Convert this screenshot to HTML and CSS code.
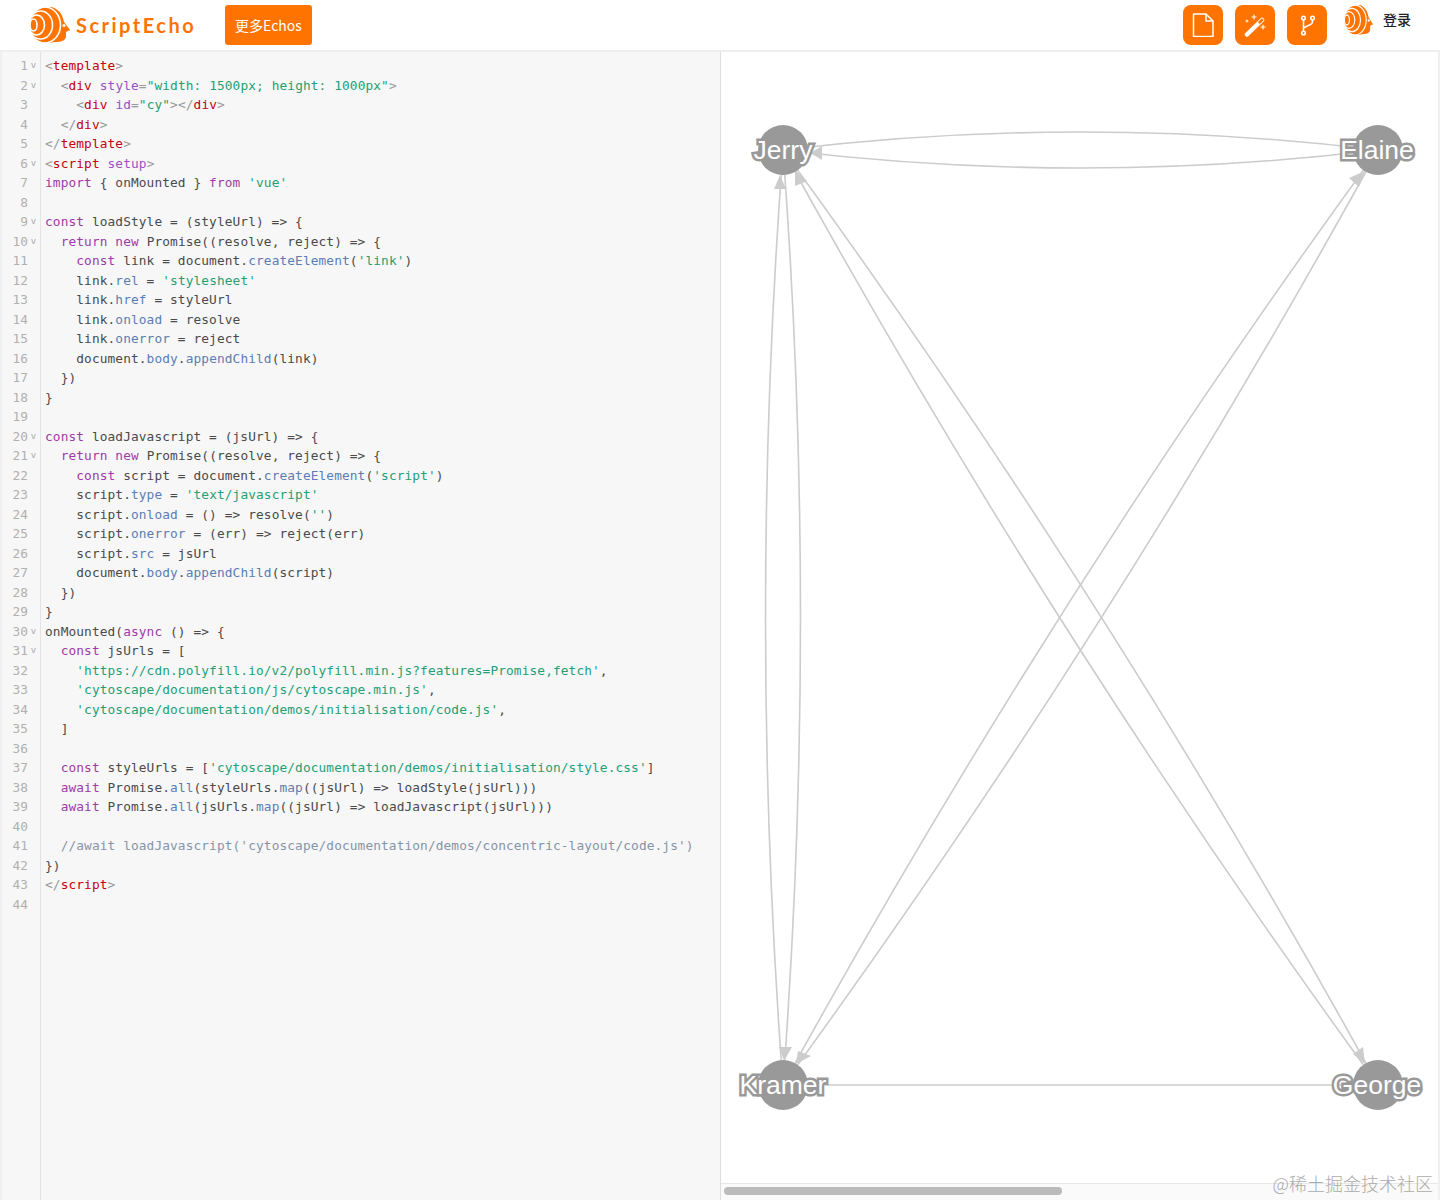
FILE: index.html
```html
<!DOCTYPE html>
<html lang="en">
<head>
  <meta charset="UTF-8">
  <title>ScriptEcho</title>
  <link rel="stylesheet" href="styles.css">
</head>
<body>
  <svg class="defs" width="0" height="0">
    <symbol id="logoHead" viewBox="0 0 42 36">
      <path fill="#ff7300" d="M12 2C17 0 24-1 28 2C33 5 35 10 36 15L42 23L38 25L38 30C37 34 33 35 27 35L20 36C10 36 0 28 0 18C0 11 5 5 12 2Z"/>
      <g fill="none" stroke="#fff" stroke-width="1.600">
        <ellipse cx="5.500" cy="18" rx="3.500" ry="6"/>
        <ellipse cx="8.500" cy="18" rx="8" ry="10"/>
        <ellipse cx="12.500" cy="18" rx="12" ry="14"/>
        <ellipse cx="16.500" cy="18" rx="16" ry="18"/>
      </g>
      <circle cx="36" cy="18.500" r="1.500" fill="#fff"/>
    </symbol>
  </svg>

  <header class="topbar">
    <div class="brand">
      <svg class="logo" width="42" height="36"><use href="#logoHead"/></svg>
      <span class="brand-name">ScriptEcho</span>
    </div>
    <button class="more-button">更多Echos</button>
    <div class="actions">
      <button class="icon-button">
        <svg width="24" height="24" viewBox="0 0 24 24" fill="none" stroke="#fff" stroke-width="1.500" stroke-linejoin="round">
          <path d="M2.500 1H15L22 8V23.500H2.500Z"/>
          <path d="M15 1V8H22"/>
        </svg>
      </button>
      <button class="icon-button">
        <svg width="24" height="24" viewBox="0 0 24 24" fill="none" stroke="#fff" stroke-linecap="round">
          <path d="M4 21.500L19 7" stroke-width="4.500"/>
          <path d="M16.600 9.300L19 7" stroke="#ff7300" stroke-width="2.600"/>
          <path d="M11 2V6M9 4H13M20 12V16M18 14H22M4 7V9M3 8H5" stroke-width="1.200"/>
        </svg>
      </button>
      <button class="icon-button">
        <svg width="24" height="24" viewBox="0 0 24 24" fill="none" stroke="#fff" stroke-width="1.600">
          <circle cx="8.500" cy="5" r="1.800"/>
          <circle cx="17.500" cy="5" r="1.800"/>
          <circle cx="8.500" cy="20" r="1.800"/>
          <path d="M8.500 7V18M17.500 7V9C17.500 12 12 12.500 8.500 15"/>
        </svg>
      </button>
      <svg class="avatar" width="30" height="30" viewBox="0 0 42 36" preserveAspectRatio="none"><use href="#logoHead"/></svg>
      <a class="login">登录</a>
    </div>
  </header>

  <main class="workspace">
    <section class="editor">
      <div class="gutter">
<div class="ln">1<i>v</i></div>
<div class="ln">2<i>v</i></div>
<div class="ln">3<i></i></div>
<div class="ln">4<i></i></div>
<div class="ln">5<i></i></div>
<div class="ln">6<i>v</i></div>
<div class="ln">7<i></i></div>
<div class="ln">8<i></i></div>
<div class="ln">9<i>v</i></div>
<div class="ln">10<i>v</i></div>
<div class="ln">11<i></i></div>
<div class="ln">12<i></i></div>
<div class="ln">13<i></i></div>
<div class="ln">14<i></i></div>
<div class="ln">15<i></i></div>
<div class="ln">16<i></i></div>
<div class="ln">17<i></i></div>
<div class="ln">18<i></i></div>
<div class="ln">19<i></i></div>
<div class="ln">20<i>v</i></div>
<div class="ln">21<i>v</i></div>
<div class="ln">22<i></i></div>
<div class="ln">23<i></i></div>
<div class="ln">24<i></i></div>
<div class="ln">25<i></i></div>
<div class="ln">26<i></i></div>
<div class="ln">27<i></i></div>
<div class="ln">28<i></i></div>
<div class="ln">29<i></i></div>
<div class="ln">30<i>v</i></div>
<div class="ln">31<i>v</i></div>
<div class="ln">32<i></i></div>
<div class="ln">33<i></i></div>
<div class="ln">34<i></i></div>
<div class="ln">35<i></i></div>
<div class="ln">36<i></i></div>
<div class="ln">37<i></i></div>
<div class="ln">38<i></i></div>
<div class="ln">39<i></i></div>
<div class="ln">40<i></i></div>
<div class="ln">41<i></i></div>
<div class="ln">42<i></i></div>
<div class="ln">43<i></i></div>
<div class="ln">44<i></i></div>
      </div>
      <pre class="code"><span class="b">&lt;</span><span class="t">template</span><span class="b">&gt;</span>
  <span class="b">&lt;</span><span class="t">div</span> <span class="a">style</span><span class="b">=</span><span class="s">"width: 1500px; height: 1000px"</span><span class="b">&gt;</span>
    <span class="b">&lt;</span><span class="t">div</span> <span class="a">id</span><span class="b">=</span><span class="s">"cy"</span><span class="b">&gt;&lt;/</span><span class="t">div</span><span class="b">&gt;</span>
  <span class="b">&lt;/</span><span class="t">div</span><span class="b">&gt;</span>
<span class="b">&lt;/</span><span class="t">template</span><span class="b">&gt;</span>
<span class="b">&lt;</span><span class="t">script</span> <span class="a">setup</span><span class="b">&gt;</span>
<span class="k">import</span> { onMounted } <span class="k">from</span> <span class="s">'vue'</span>

<span class="k">const</span> loadStyle = (styleUrl) =&gt; {
  <span class="k">return</span> <span class="k">new</span> Promise((resolve, reject) =&gt; {
    <span class="k">const</span> link = document.<span class="p">createElement</span>(<span class="s">'link'</span>)
    link.<span class="p">rel</span> = <span class="s">'stylesheet'</span>
    link.<span class="p">href</span> = styleUrl
    link.<span class="p">onload</span> = resolve
    link.<span class="p">onerror</span> = reject
    document.<span class="p">body</span>.<span class="p">appendChild</span>(link)
  })
}

<span class="k">const</span> loadJavascript = (jsUrl) =&gt; {
  <span class="k">return</span> <span class="k">new</span> Promise((resolve, reject) =&gt; {
    <span class="k">const</span> script = document.<span class="p">createElement</span>(<span class="s">'script'</span>)
    script.<span class="p">type</span> = <span class="s">'text/javascript'</span>
    script.<span class="p">onload</span> = () =&gt; resolve(<span class="s">''</span>)
    script.<span class="p">onerror</span> = (err) =&gt; reject(err)
    script.<span class="p">src</span> = jsUrl
    document.<span class="p">body</span>.<span class="p">appendChild</span>(script)
  })
}
onMounted(<span class="k">async</span> () =&gt; {
  <span class="k">const</span> jsUrls = [
    <span class="s">'https://cdn.polyfill.io/v2/polyfill.min.js?features=Promise,fetch'</span>,
    <span class="s">'cytoscape/documentation/js/cytoscape.min.js'</span>,
    <span class="s">'cytoscape/documentation/demos/initialisation/code.js'</span>,
  ]

  <span class="k">const</span> styleUrls = [<span class="s">'cytoscape/documentation/demos/initialisation/style.css'</span>]
  <span class="k">await</span> Promise.<span class="p">all</span>(styleUrls.<span class="p">map</span>((jsUrl) =&gt; loadStyle(jsUrl)))
  <span class="k">await</span> Promise.<span class="p">all</span>(jsUrls.<span class="p">map</span>((jsUrl) =&gt; loadJavascript(jsUrl)))

  <span class="c">//await loadJavascript('cytoscape/documentation/demos/concentric-layout/code.js')</span>
})
<span class="b">&lt;/</span><span class="t">script</span><span class="b">&gt;</span>
</pre>
    </section>

    <section class="stage">
      <svg class="graph" viewBox="721 52 717 1131">
        <g class="edges">
          <path d="M783 150Q1080 114 1378 150"/>
          <path d="M1378 150Q1080 186 783 150"/>
          <path d="M783 150Q748 617 783 1085"/>
          <path d="M783 150Q818 617 783 1085"/>
          <path d="M783 150Q1110 598 1378 1085"/>
          <path d="M783 150Q1051 637 1378 1085"/>
          <path d="M1378 150Q1110 637 783 1085"/>
          <path d="M1378 150Q1051 598 783 1085"/>
          <path d="M783 1085H1378"/>
        </g>
        <g class="arrows">
          <polygon points="810,153 822,146 822,160"/>
          <polygon points="780,175 774,189 786,189"/>
          <polygon points="795,170 795,186 807,181"/>
          <polygon points="1365,171 1349,178 1359,187"/>
          <polygon points="784,1061 779,1047 792,1047"/>
          <polygon points="796,1064 798,1051 811,1056"/>
          <polygon points="1365,1064 1353,1054 1363,1047"/>
        </g>
        <g class="nodes">
          <circle cx="783" cy="150" r="25"/>
          <circle cx="1378" cy="150" r="25"/>
          <circle cx="783" cy="1085" r="25"/>
          <circle cx="1378" cy="1085" r="25"/>
        </g>
        <g class="labels">
          <text x="783" y="159">Jerry</text>
          <text x="1377" y="159">Elaine</text>
          <text x="783" y="1094">Kramer</text>
          <text x="1377" y="1094">George</text>
        </g>
      </svg>
      <div class="scroll-track"><div class="scroll-thumb"></div></div>
      <div class="watermark">@稀土掘金技术社区</div>
    </section>
  </main>
</body>
</html>
```

FILE: styles.css
```css
html, body {
  height: 100%;
}
body {
  margin: 0;
  overflow: hidden;
  background-color: #fff;
  display: flex;
  flex-direction: column;
  font-family: "Noto Sans CJK SC", "Liberation Sans", sans-serif;
}
.defs {
  display: none;
}
.topbar {
  height: 50px;
  flex: none;
  display: flex;
  align-items: center;
  padding-left: 28px;
  padding-right: 29px;
  border-bottom: 2px solid #eee;
}
.brand {
  display: flex;
  align-items: center;
  width: 197px;
}
.logo {
  flex: none;
}
.brand-name {
  margin-left: 6px;
  color: #ff7300;
  font-family: Lato, sans-serif;
  font-size: 20px;
  font-weight: 700;
  letter-spacing: 2.5px;
}
.more-button {
  width: 87px;
  height: 40px;
  padding: 0;
  border: none;
  border-radius: 3px;
  background-color: #ff7300;
  color: #fff;
  font-family: inherit;
  font-size: 14px;
}
.actions {
  margin-left: auto;
  display: flex;
  align-items: center;
  gap: 12px;
}
.icon-button {
  width: 40px;
  height: 40px;
  padding: 0;
  border: none;
  border-radius: 8px;
  background-color: #ff7300;
  display: flex;
  align-items: center;
  justify-content: center;
}
.avatar {
  margin-left: 4px;
  margin-top: -10px;
}
.login {
  margin-left: -2px;
  margin-top: -12px;
  width: 28px;
  color: #222;
  font-size: 14px;
  font-weight: 500;
}
.workspace {
  flex: 1;
  min-height: 0;
  display: flex;
}
.editor {
  width: 721px;
  flex: none;
  display: flex;
  box-sizing: border-box;
  border-left: 2px solid #f0f0f0;
  border-right: 1px solid #ddd;
  background-color: #f7f7f7;
  font-family: "DejaVu Sans Mono", monospace;
  font-size: 12.8px;
  line-height: 19.5px;
}
.gutter {
  width: 39px;
  flex: none;
  box-sizing: border-box;
  padding-top: 4px;
  border-right: 1px solid #e3e3e3;
  color: #b0b0b0;
}
.ln {
  display: flex;
  justify-content: flex-end;
  padding-right: 2px;
}
.ln i {
  width: 9px;
  margin-left: 1px;
  font-style: normal;
  font-size: 9px;
  text-align: center;
  color: #aaa;
}
.code {
  margin: 0;
  padding: 4px 0 0 4px;
  font: inherit;
  letter-spacing: 0.11px;
  color: #4a4a4a;
  white-space: pre;
}
.b { color: #999; }
.t { color: #c5000b; }
.a { color: #9a50c8; }
.s { color: #22a074; }
.k { color: #a03aa8; }
.p { color: #5a7db5; }
.c { color: #8794a8; }
.stage {
  flex: 1;
  min-width: 0;
  display: flex;
  flex-direction: column;
  position: relative;
  border-right: 2px solid #f0f0f0;
}
.graph {
  flex: 1;
  min-height: 0;
  display: block;
  width: 100%;
}
.edges path {
  fill: none;
  stroke: #ccc;
  stroke-width: 1.6;
}
.arrows polygon {
  fill: #ccc;
}
.nodes circle {
  fill: #999;
}
.labels text {
  font-family: "Liberation Sans", sans-serif;
  font-size: 26.5px;
  text-anchor: middle;
  fill: #fff;
  stroke: #999;
  stroke-width: 5px;
  paint-order: stroke;
}
.scroll-track {
  height: 13px;
  flex: none;
  padding: 3px 3px 0;
  border-top: 1px solid #e8e8e8;
  background-color: #fafafa;
}
.scroll-thumb {
  width: 338px;
  height: 8px;
  border-radius: 4px;
  background-color: #bbb;
}
.watermark {
  position: absolute;
  right: 5px;
  bottom: 6px;
  color: #aaa;
  font-size: 18px;
  font-weight: 300;
  line-height: 22px;
}
```
